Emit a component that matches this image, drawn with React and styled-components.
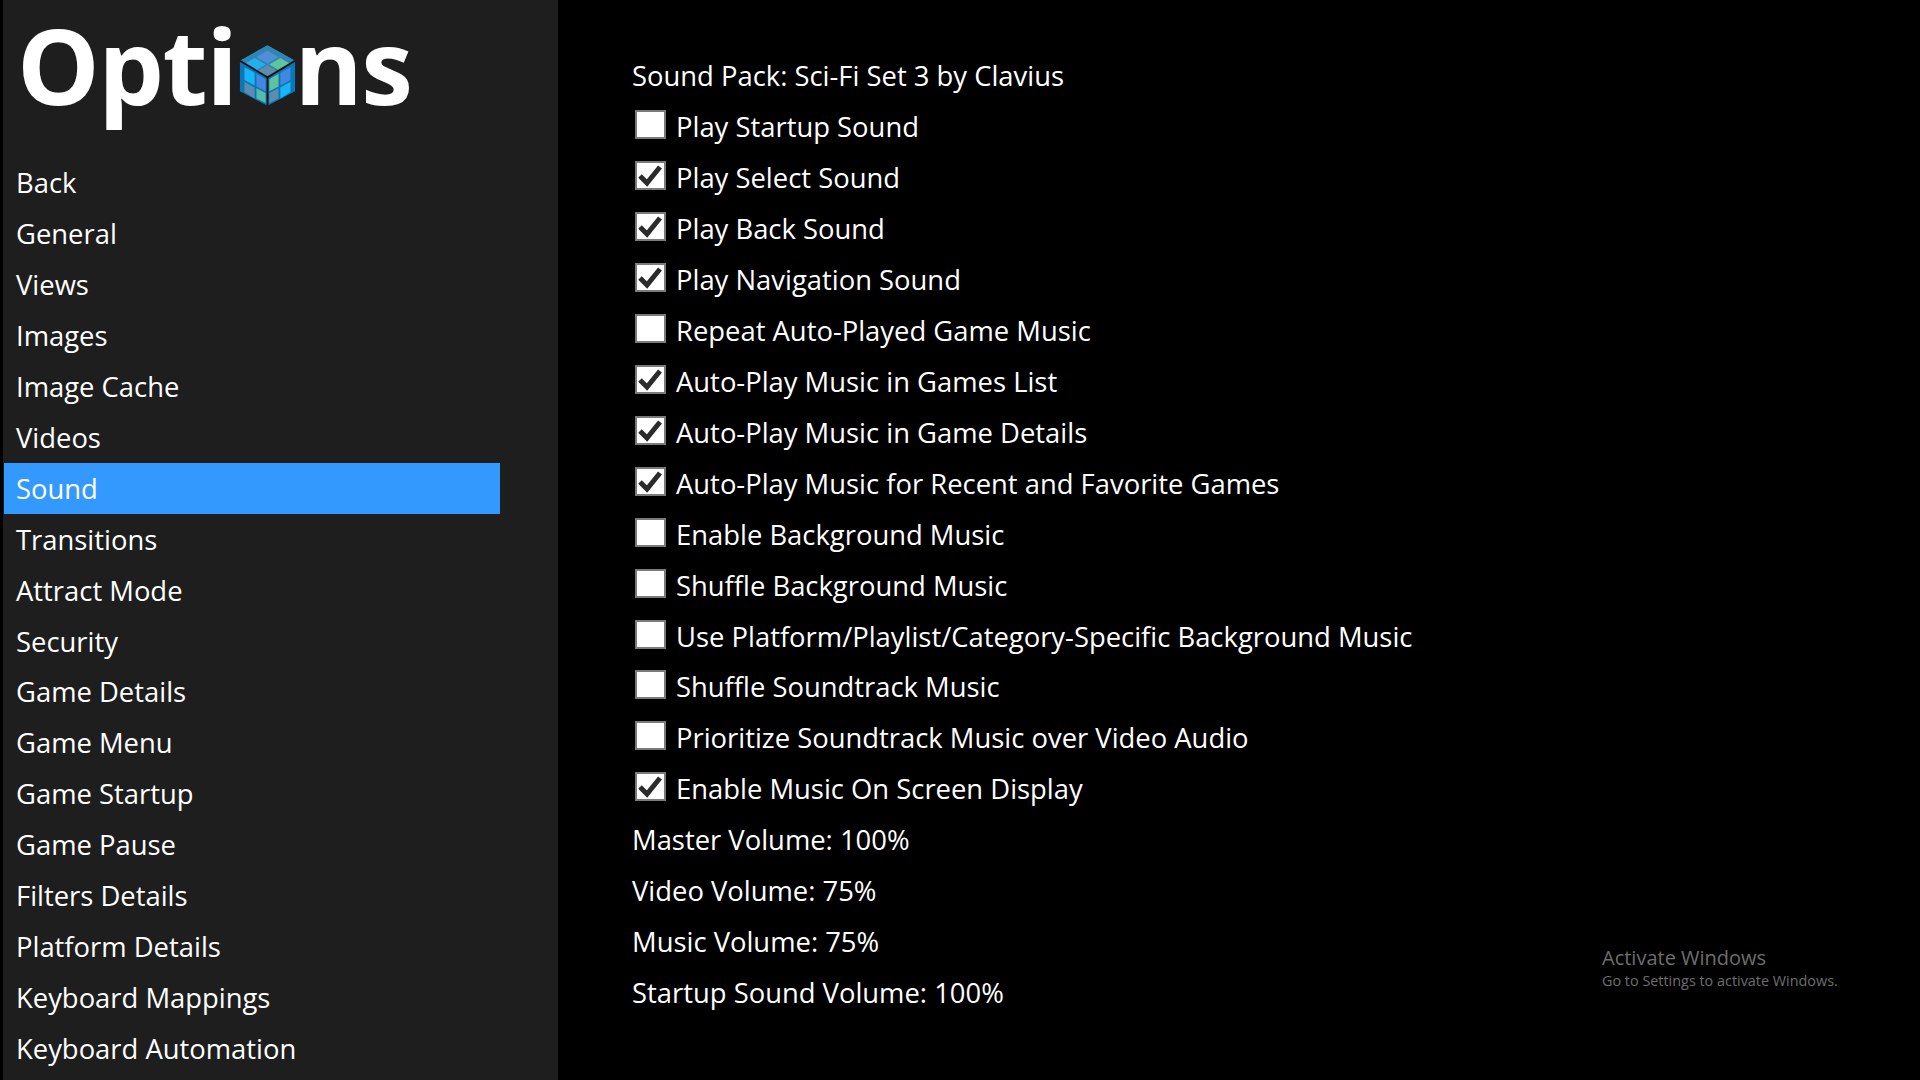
import React from "react";
import styled, { createGlobalStyle } from "styled-components";

const GlobalStyle = createGlobalStyle`
  html, body {
    margin: 0;
    padding: 0;
    background: #000;
    overflow: hidden;
  }
`;

const Page = styled.div`
  width: 1920px;
  height: 1080px;
  display: flex;
  background: #000;
  color: #fff;
  font-family: "Open Sans", "Noto Sans", sans-serif;
  font-size: 27.4px;
  position: relative;
  overflow: hidden;
`;
const Sidebar = styled.div`
  width: 555px;
  margin-left: 3px;
  height: 1080px;
  flex-shrink: 0;
  background: #1e1e1e;
  padding: 0 0 0 1px;
  box-sizing: border-box;
`;
const Title = styled.div`
  height: 157px;
  padding-left: 13px;
  display: flex;
  align-items: flex-start;
  font-size: 104px;
  font-weight: 700;
  line-height: 130px;
  letter-spacing: -1.5px;
`;
const CubeWrap = styled.span`
  display: inline-flex;
  width: 57px;
  height: 65px;
  margin: 43px -2px 0 3px;
`;
const MenuItem = styled.div`
  width: 496px;
  height: ${(p) => (p.$short ? 50 : 51)}px;
  line-height: 51px;
  padding-left: 12px;
  box-sizing: border-box;
  background: ${(p) => (p.$active ? "#3399ff" : "transparent")};
`;
const Main = styled.div`
  padding: 50px 0 0 74px;
`;
const Row = styled.div`
  height: ${(p) => (p.$short ? 50 : 51)}px;
  line-height: 51px;
  display: flex;
  white-space: nowrap;
`;
const Box = styled.span`
  width: 31px;
  height: 29px;
  box-sizing: border-box;
  margin: 9px 10px 0 3px;
  background: #fff;
  border: 2px solid #7a7a7a;
  display: flex;
  align-items: center;
  justify-content: center;
`;
const Watermark = styled.div`
  position: absolute;
  left: 1602px;
  top: 944px;
  color: #6e6e6e;
  font-family: "Open Sans", sans-serif;
`;
const WatermarkTitle = styled.div`
  font-size: 20px;
  line-height: 27px;
`;
const WatermarkSub = styled.div`
  font-size: 14.4px;
  line-height: 20px;
`;

const Cube = () => (
  <svg width="57" height="65" viewBox="0 0 62 66">
    <polygon points="31,0 61,17 61,50 31,66 1,50 1,17" fill="#0b76b8" />
    <polygon points="31,0 61,17 31,35 1,17" fill="#2f86b4" />
    <polygon points="31,6 43,13 31,20 19,13" fill="#4f8fd8" />
    <polygon points="17,14 29,21 19,27 7,20" fill="#22b0ea" />
    <polygon points="45,14 55,20 43,27 33,21" fill="#62c49a" />
    <polygon points="31,22 41,28 31,35 21,28" fill="#5f8fa8" />
    <polygon points="6,24 17,30 17,44 6,38" fill="#18b4f8" />
    <polygon points="19,31 29,37 29,50 19,45" fill="#4188e0" />
    <polygon points="6,40 17,46 17,58 6,51" fill="#5d8cae" />
    <polygon points="19,47 29,52 29,63 19,58" fill="#54bca8" />
    <polygon points="33,37 43,31 43,45 33,50" fill="#5fc29c" />
    <polygon points="45,30 56,24 56,38 45,44" fill="#4188e0" />
    <polygon points="33,52 43,47 43,58 33,63" fill="#5d8cae" />
    <polygon points="45,46 56,40 56,51 45,58" fill="#18b4f8" />
    <polyline points="1,17 31,35 61,17" fill="none" stroke="#111" strokeWidth="2" />
    <line x1="31" y1="35" x2="31" y2="66" stroke="#111" strokeWidth="2" />
  </svg>
);

const Check = () => (
  <svg width="25" height="23" viewBox="0 0 25 23">
    <polyline points="2,12 9,19 22,3" fill="none" stroke="#2b2b2b" strokeWidth="5" />
  </svg>
);

const menu = [
  "Back", "General", "Views", "Images", "Image Cache", "Videos", "Sound", "Transitions",
  "Attract Mode", "Security", "Game Details", "Game Menu", "Game Startup", "Game Pause",
  "Filters Details", "Platform Details", "Keyboard Mappings", "Keyboard Automation",
];

const options = [
  { text: "Sound Pack: Sci-Fi Set 3 by Clavius" },
  { text: "Play Startup Sound", box: true },
  { text: "Play Select Sound", box: true, checked: true },
  { text: "Play Back Sound", box: true, checked: true },
  { text: "Play Navigation Sound", box: true, checked: true },
  { text: "Repeat Auto-Played Game Music", box: true },
  { text: "Auto-Play Music in Games List", box: true, checked: true },
  { text: "Auto-Play Music in Game Details", box: true, checked: true },
  { text: "Auto-Play Music for Recent and Favorite Games", box: true, checked: true },
  { text: "Enable Background Music", box: true },
  { text: "Shuffle Background Music", box: true },
  { text: "Use Platform/Playlist/Category-Specific Background Music", box: true, short: true },
  { text: "Shuffle Soundtrack Music", box: true },
  { text: "Prioritize Soundtrack Music over Video Audio", box: true },
  { text: "Enable Music On Screen Display", box: true, checked: true },
  { text: "Master Volume: 100%" },
  { text: "Video Volume: 75%" },
  { text: "Music Volume: 75%" },
  { text: "Startup Sound Volume: 100%" },
];

export default function App() {
  return (
    <Page>
      <GlobalStyle />
      <Sidebar>
        <Title>
          Opti
          <CubeWrap>
            <Cube />
          </CubeWrap>
          ns
        </Title>
        {menu.map((item) => (
          <MenuItem key={item} $active={item === "Sound"} $short={item === "Security"}>
            {item}
          </MenuItem>
        ))}
      </Sidebar>
      <Main>
        {options.map((o) => (
          <Row key={o.text} $short={o.short}>
            {o.box && <Box>{o.checked && <Check />}</Box>}
            {o.text}
          </Row>
        ))}
      </Main>
      <Watermark>
        <WatermarkTitle>Activate Windows</WatermarkTitle>
        <WatermarkSub>Go to Settings to activate Windows.</WatermarkSub>
      </Watermark>
    </Page>
  );
}
